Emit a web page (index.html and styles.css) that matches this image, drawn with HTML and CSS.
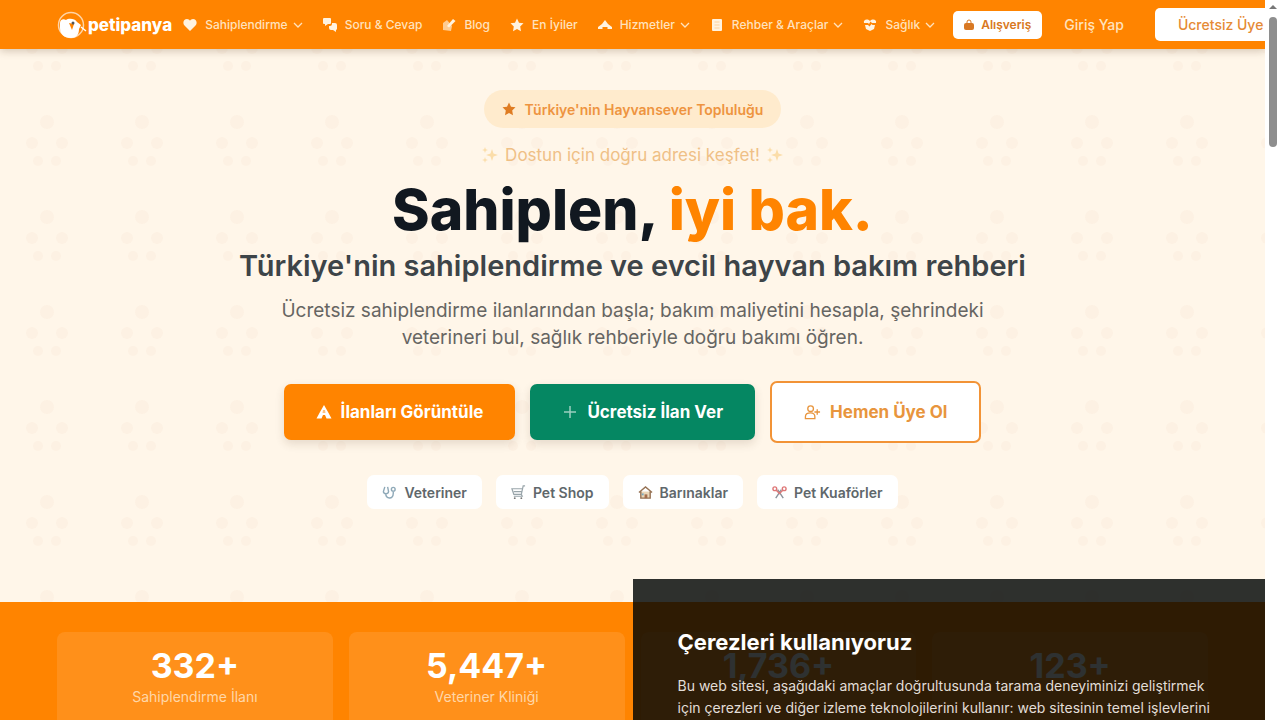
FILE: index.html
```html
<!DOCTYPE html>
<html lang="tr">
<head>
  <meta charset="UTF-8">
  <meta name="viewport" content="width=device-width, initial-scale=1">
  <title>Petipanya</title>
  <link rel="stylesheet" href="styles.css">
</head>
<body>
  <!-- Shared icons -->
  <svg class="sprite" aria-hidden="true">
    <symbol id="chevron" viewBox="0 0 10 10"><path d="M1 3l4 4 4-4" fill="none" stroke="currentColor" stroke-width="1.3"/></symbol>
    <symbol id="star" viewBox="0 0 14 14"><path d="M7 .5l2 4.2 4.5.6-3.3 3.2.8 4.7-4-2.3-4 2.3.8-4.7L.5 5.3 5 4.7z" fill="currentColor"/></symbol>
    <symbol id="sparkles" viewBox="0 0 18 18"><path d="M11 3l1.500 4.500L17 9l-4.500 1.500L11 15l-1.500-4.500L5 9l4.500-1.500zM4 1l.8 2.200L7 4l-2.200.8L4 7l-.8-2.200L1 4l2.200-.8zM4 11l.7 2.300L7 14l-2.300.7L4 17l-.7-2.300L1 14l2.300-.7z" fill="currentColor"/></symbol>
  </svg>

  <div class="page">
    <header class="header">
      <a href="#" class="logo">
        <svg width="31" height="30" viewBox="0 0 31 30" aria-hidden="true">
          <circle cx="14" cy="15" r="12.500" fill="none" stroke="#fff" stroke-opacity=".65" stroke-width="1.500"/>
          <path d="M3 13c0-3 3-5 6-3 2-2 9-2 11 2l4 3-2 4c0 6-3 9-8 9-7 0-11-4-11-10z" fill="#fff"/>
          <path d="M12 13l5 1-2 6z" fill="#ff8400"/>
          <circle cx="16" cy="13" r="1.500" fill="#555"/>
          <path d="M24 17l5 4" stroke="#fff" stroke-width="1.500"/>
        </svg>
        <span>petipanya</span>
      </a>
      <nav class="nav">
        <a href="#">
          <svg class="icon" viewBox="0 0 14 14"><path d="M7 13L1.500 7.500C-1 4.500 1 1 4 1c1.400 0 2.400.8 3 1.800C7.600 1.800 8.600 1 10 1c3 0 5 3.500 2.500 6.500z" fill="currentColor"/></svg>
          Sahiplendirme
          <svg class="chevron"><use href="#chevron"/></svg>
        </a>
        <a href="#">
          <svg class="icon" viewBox="0 0 14 14"><path d="M1 0h6a1 1 0 0 1 1 1v4a1 1 0 0 1-1 1H5L2 8V6H1a1 1 0 0 1-1-1V1a1 1 0 0 1 1-1z M9 5h3a2 2 0 0 1 2 2v3a2 2 0 0 1-1 2v2l-3-2H8a2 2 0 0 1-2-2V8h1a2 2 0 0 0 2-2z" fill="currentColor"/></svg>
          Soru &amp; Cevap
        </a>
        <a href="#">
          <svg class="icon" viewBox="0 0 14 14"><path d="M5 2L1 5v7l8 1 1-5" fill="currentColor" fill-opacity=".65"/><path d="M5 8l6-7 2.500 2L7 9.500z" fill="currentColor"/></svg>
          Blog
        </a>
        <a href="#">
          <svg class="icon"><use href="#star"/></svg>
          En İyiler
        </a>
        <a href="#">
          <svg class="icon" viewBox="0 0 14 14"><path d="M7 2l3 4 4 3v2H9.500V9h-5v2H0V9l4-3z" fill="currentColor"/></svg>
          Hizmetler
          <svg class="chevron"><use href="#chevron"/></svg>
        </a>
        <a href="#">
          <svg class="icon" viewBox="0 0 14 14"><rect x="2" y="1" width="10" height="12" rx="1" fill="currentColor"/><path d="M4.500 4h5M4.500 7h5M4.500 10h5" stroke="#ff8400" stroke-opacity=".3"/></svg>
          Rehber &amp; Araçlar
          <svg class="chevron"><use href="#chevron"/></svg>
        </a>
        <a href="#">
          <svg class="icon" viewBox="0 0 14 14"><path d="M1 5C0 2 4 0 7 3c3-3 7-1 6 2H9L7.500 3.500 6 6 5 5zM2 7h3l1.500 1.500L8.500 6 9.500 7H12l-1 4-4 2-4-2z" fill="currentColor"/></svg>
          Sağlık
          <svg class="chevron"><use href="#chevron"/></svg>
        </a>
      </nav>
      <a href="#" class="shop-link">
        <svg width="10" height="12" viewBox="0 0 10 12" aria-hidden="true"><path d="M3 4V3a2 2 0 0 1 4 0v1" fill="none" stroke="currentColor"/><rect y="4" width="10" height="7" rx="2" fill="currentColor"/></svg>
        Alışveriş
      </a>
      <a href="#" class="login-link">Giriş Yap</a>
      <a href="#" class="signup-link">Ücretsiz Üye Ol</a>
    </header>

    <main>
      <section class="hero">
        <div class="badge">
          <svg class="badge-icon"><use href="#star"/></svg>
          Türkiye'nin Hayvansever Topluluğu
        </div>
        <p class="tagline">
          <svg class="sparkles"><use href="#sparkles"/></svg>
          Dostun için doğru adresi keşfet!
          <svg class="sparkles"><use href="#sparkles"/></svg>
        </p>
        <h1>Sahiplen, <span class="accent">iyi bak.</span></h1>
        <h2>Türkiye'nin sahiplendirme ve evcil hayvan bakım rehberi</h2>
        <p class="lead">Ücretsiz sahiplendirme ilanlarından başla; bakım maliyetini hesapla, şehrindeki veterineri bul, sağlık rehberiyle doğru bakımı öğren.</p>

        <div class="hero-actions">
          <a href="#" class="button button-orange">
            <svg width="16" height="16" viewBox="0 0 16 16" aria-hidden="true"><path d="M8 1l4 7 3.500 6.500h-5L9 11H7l-1.500 3.500h-5L4 8z" fill="currentColor"/><path d="M7 6h2l.5 3h-3z" fill="#ff8400" fill-opacity=".5"/></svg>
            İlanları Görüntüle
          </a>
          <a href="#" class="button button-green">
            <svg width="16" height="16" viewBox="0 0 16 16" aria-hidden="true"><path d="M8 2v12M2 8h12" stroke="currentColor" stroke-opacity=".6" stroke-width="1.500"/></svg>
            Ücretsiz İlan Ver
          </a>
          <a href="#" class="button button-outline">
            <svg width="17" height="16" viewBox="0 0 18 16" aria-hidden="true"><g fill="none" stroke="currentColor" stroke-width="1.400"><circle cx="7" cy="4.500" r="3"/><path d="M1.500 15v-2c0-3 2-4 5.500-4s4.500 2 4.500 4v2zM14 5v6M11 8h6"/></g></svg>
            Hemen Üye Ol
          </a>
        </div>

        <div class="chips">
          <a href="#" class="chip">
            <svg class="chip-icon" viewBox="0 0 16 16"><g fill="none" stroke="#8fa9b8" stroke-width="1.500"><path d="M3 2L1.500 7c0 3 5 3 5.500 0L6 2M4 9c0 6 8 7 8 0V7"/><circle cx="12" cy="4.500" r="2"/></g></svg>
            Veteriner
          </a>
          <a href="#" class="chip">
            <svg class="chip-icon" viewBox="0 0 16 16"><path d="M15 1h-2l-2 9H3L1 4h11M3 7h8M11 10l1 2H3" fill="none" stroke="#99a5aa" stroke-width="1.300"/><circle cx="4" cy="14" r="1" fill="#777"/><circle cx="11" cy="14" r="1" fill="#777"/></svg>
            Pet Shop
          </a>
          <a href="#" class="chip">
            <svg class="chip-icon" viewBox="0 0 16 16"><path d="M3 7h10v7H3z" fill="#ead6b8"/><path d="M1 8l7-6 7 6M3 7v7h10V7" fill="none" stroke="#967254" stroke-width="1.500"/><path d="M7 10h3v4H7z" fill="#a36d4d"/><path d="M4 9h2v2H4z" fill="#77a7bd"/></svg>
            Barınaklar
          </a>
          <a href="#" class="chip">
            <svg class="chip-icon" viewBox="0 0 16 16"><path d="M4 14l6-9M12 14L6 5" stroke="#8b929b" stroke-width="1.500"/><g fill="none" stroke="#df7777" stroke-width="1.500"><circle cx="3" cy="4" r="2"/><circle cx="13" cy="4" r="2"/><path d="M4.500 5.500L8 9l3.500-3.500"/></g></svg>
            Pet Kuaförler
          </a>
        </div>
      </section>

      <section class="stats">
        <div class="stat"><strong>332+</strong><span>Sahiplendirme İlanı</span></div>
        <div class="stat"><strong>5,447+</strong><span>Veteriner Kliniği</span></div>
        <div class="stat"><strong>1,736+</strong></div>
        <div class="stat"><strong>123+</strong></div>
      </section>
    </main>

    <!-- Cookie notice -->
    <aside class="cookie-notice">
      <h3>Çerezleri kullanıyoruz</h3>
      <p>Bu web sitesi, aşağıdaki amaçlar doğrultusunda tarama deneyiminizi geliştirmek için çerezleri ve diğer izleme teknolojilerini kullanır: web sitesinin temel işlevlerini</p>
    </aside>
  </div>

  <div class="scrollbar" aria-hidden="true">
    <div class="scroll-arrow"></div>
    <div class="scroll-thumb"></div>
  </div>
</body>
</html>
```
FILE: styles.css
```css
* {
  box-sizing: border-box;
}
body {
  display: flex;
  height: 100vh;
  margin: 0;
  overflow: hidden;
  background-color: #fff;
  color: #374151;
  font-family: Inter, "Liberation Sans", sans-serif;
}
a {
  color: inherit;
  text-decoration: none;
}
svg {
  flex-shrink: 0;
}
.sprite {
  position: absolute;
  width: 0;
  height: 0;
}
.page {
  position: relative;
  flex: 1;
  min-width: 0;
  overflow: hidden;
}

/* Header */
.header {
  position: relative;
  display: flex;
  align-items: center;
  height: 49px;
  padding-left: 57px;
  background-color: #ff8400;
  box-shadow: 0 2px 8px rgba(80, 50, 20, 0.25);
  color: #fff;
  white-space: nowrap;
}
.logo {
  display: flex;
  align-items: center;
  margin-right: 1px;
  font-size: 17px;
  font-weight: 800;
}
.nav {
  display: flex;
  font-size: 12px;
  font-weight: 500;
}
.nav a {
  display: flex;
  align-items: center;
  padding: 8px 10px;
  color: #ffe2bd;
}
.icon {
  width: 14px;
  height: 14px;
  margin-right: 8px;
  color: #fff3e0;
}
.chevron {
  width: 10px;
  height: 10px;
  margin-left: 5px;
}
.shop-link {
  display: flex;
  align-items: center;
  gap: 7px;
  height: 28px;
  margin-left: 8px;
  padding: 0 11px;
  border-radius: 5px;
  background-color: #fff;
  color: #d87822;
  font-size: 12px;
  font-weight: 600;
}
.login-link {
  margin: 0 31px 0 22px;
  color: #ffe2bd;
  font-size: 14px;
  font-weight: 500;
}
.signup-link {
  padding: 0 23px;
  border-radius: 5px;
  background-color: #fff;
  color: #e58a35;
  font-size: 14px;
  font-weight: 500;
  line-height: 33px;
}

/* Hero */
.hero {
  display: flex;
  flex-direction: column;
  align-items: center;
  padding: 41px 24px 93px;
  background-color: #fff6e9;
  background-image: url("data:image/svg+xml,%3Csvg xmlns='http://www.w3.org/2000/svg' width='95' height='95'%3E%3Cg fill='%23d87030' fill-opacity='.03'%3E%3Ccircle cx='47' cy='28' r='7'/%3E%3Ccircle cx='32' cy='49' r='6'/%3E%3Ccircle cx='62' cy='49' r='6'/%3E%3Ccircle cx='38' cy='67' r='5'/%3E%3Ccircle cx='56' cy='67' r='5'/%3E%3C/g%3E%3C/svg%3E");
  background-position: 0 45px;
  text-align: center;
}
.badge {
  display: flex;
  align-items: center;
  height: 38px;
  padding: 0 18px;
  border-radius: 19px;
  background-color: #ffebcd;
  color: #ee9440;
  font-size: 14px;
  font-weight: 600;
}
.badge-icon {
  width: 14px;
  height: 14px;
  margin-right: 9px;
  color: #df7c22;
}
.tagline {
  display: flex;
  align-items: center;
  gap: 6px;
  margin: 15px 0 0;
  color: #efc086;
  font-size: 17px;
  line-height: 24px;
}
.sparkles {
  width: 18px;
  height: 18px;
  color: #fbdda9;
}
h1 {
  margin: 13px 0 0;
  color: #111820;
  font-size: 57px;
  font-weight: 800;
  line-height: 60px;
}
.accent {
  color: #ff8400;
}
h2 {
  margin: 8px 0 0;
  color: #3d4448;
  font-size: 29px;
  font-weight: 600;
  line-height: 36px;
}
.lead {
  max-width: 730px;
  margin: 13px 0 0;
  color: #666562;
  font-size: 19px;
  line-height: 27px;
}
.hero-actions {
  display: flex;
  align-items: center;
  gap: 15px;
  margin-top: 30px;
}
.button {
  display: flex;
  align-items: center;
  gap: 9px;
  height: 56px;
  padding: 0 32px;
  border-radius: 7px;
  box-shadow: 0 4px 10px rgba(80, 50, 20, 0.14);
  color: #fff;
  font-size: 17px;
  font-weight: 700;
}
.button-orange {
  background-color: #ff8400;
}
.button-green {
  background-color: #058762;
}
.button-outline {
  height: 62px;
  border: 2px solid #f29336;
  background-color: #fff;
  box-shadow: none;
  color: #e8953d;
}
.chips {
  display: flex;
  gap: 14px;
  margin-top: 32px;
}
.chip {
  display: flex;
  align-items: center;
  gap: 7px;
  height: 34px;
  padding: 0 15px;
  border-radius: 7px;
  background-color: #fff;
  color: #60676b;
  font-size: 14px;
  font-weight: 600;
}
.chip-icon {
  width: 15px;
  height: 15px;
}

/* Stats */
.stats {
  display: grid;
  grid-template-columns: repeat(4, 1fr);
  gap: 16px;
  padding: 30px 57px;
  background-color: #ff8400;
}
.stat {
  display: flex;
  flex-direction: column;
  align-items: center;
  padding: 14px 16px 24px;
  border-radius: 8px;
  background-color: rgba(255, 255, 255, 0.1);
}
.stat strong {
  color: #fff;
  font-size: 34px;
  font-weight: 700;
  line-height: 40px;
}
.stat span {
  margin-top: 1px;
  color: #ffd7a8;
  font-size: 14px;
  line-height: 20px;
}

/* Cookie notice, pinned over the page */
.cookie-notice {
  position: absolute;
  top: 579px;
  right: 0;
  width: 50%;
  padding: 48px 45px;
  background-color: rgba(0, 4, 4, 0.82);
  color: #e2ddd7;
}
.cookie-notice h3 {
  margin: 0 0 18px;
  color: #fff;
  font-size: 22px;
  font-weight: 700;
  line-height: 30px;
}
.cookie-notice p {
  margin: 0;
  font-size: 14px;
  line-height: 22px;
}

/* Scrollbar */
.scrollbar {
  display: flex;
  flex-direction: column;
  align-items: center;
  gap: 8px;
  width: 15px;
  padding-top: 5px;
  background-color: #fff;
}
.scroll-arrow {
  border: 4px solid transparent;
  border-top: 0;
  border-bottom: 4px solid #777;
}
.scroll-thumb {
  width: 8px;
  height: 130px;
  border-radius: 4px;
  background-color: #8e8e8e;
}
```
